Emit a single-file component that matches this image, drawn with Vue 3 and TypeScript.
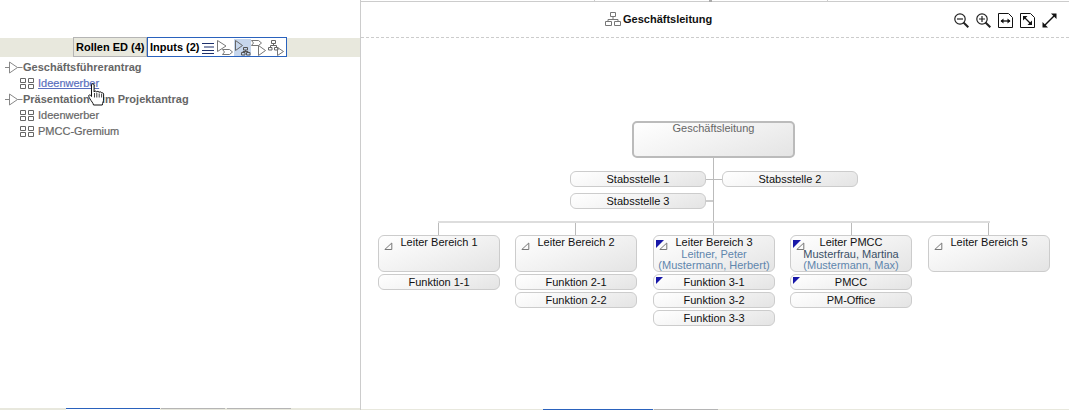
<script setup lang="ts">
interface Sub { label: string; mark?: boolean }
interface Lead { x: number; drop: number; title: string; lines?: { text: string; kind: string }[]; mark?: boolean; subs: Sub[] }

const staffs = [
  { label: 'Stabsstelle 1', x: 209, y: 133 },
  { label: 'Stabsstelle 2', x: 361, y: 133 },
  { label: 'Stabsstelle 3', x: 209, y: 155 }
]
const leads: Lead[] = [
  { x: 17, drop: 78, title: 'Leiter Bereich 1', subs: [{ label: 'Funktion 1-1' }] },
  { x: 154, drop: 215, title: 'Leiter Bereich 2', subs: [{ label: 'Funktion 2-1' }, { label: 'Funktion 2-2' }] },
  { x: 292, drop: 353, title: 'Leiter Bereich 3', mark: true, lines: [{ text: 'Leitner, Peter', kind: 'blue' }, { text: '(Mustermann, Herbert)', kind: 'blue' }], subs: [{ label: 'Funktion 3-1', mark: true }, { label: 'Funktion 3-2' }, { label: 'Funktion 3-3' }] },
  { x: 429, drop: 491, title: 'Leiter PMCC', mark: true, lines: [{ text: 'Musterfrau, Martina', kind: 'dark' }, { text: '(Mustermann, Max)', kind: 'blue' }], subs: [{ label: 'PMCC', mark: true }, { label: 'PM-Office' }] },
  { x: 567, drop: 628, title: 'Leiter Bereich 5', subs: [] }
]
const drops = leads.map(l => l.drop)
const tree = [
  { label: 'Geschäftsführerantrag', level: 1 },
  { label: 'Ideenwerber', level: 2, link: true },
  { label: 'Präsentation zum Projektantrag', level: 1 },
  { label: 'Ideenwerber', level: 2 },
  { label: 'PMCC-Gremium', level: 2 }
]
</script>

<template>
  <div class="page">
    <aside class="left">
      <div class="tabbar">
        <div class="tab">Rollen ED (4)</div>
        <div class="tab active">
          <span class="tablabel">Inputs (2)</span>
          <svg class="ti list" width="13" height="17" viewBox="0 0 13 17"><path d="M0 4.500h12M2 8h10M0 11.500h12M0 14.500h12" stroke="#1c2f6b" stroke-width="1.100" fill="none"/></svg>
          <svg class="ti" width="17" height="17" viewBox="0 0 17 17" fill="none" stroke="#777"><path d="M.5 1.500v11l8.500-5.500zM5.500 10.500h7l3 2.500-3 2.500h-7l2-2.500z"/></svg>
          <svg class="ti sel" width="17" height="17" viewBox="0 0 17 17" fill="none" stroke="#666"><path d="M1.500 1.500v10l7-5z"/><path d="M9.500 8.500h4v2.500h-4zM11.500 11v1.500M9 13.500v-1h5v1M7.500 13.500h3.500v2.500H7.500zM12.500 13.500H16v2.500h-3.500z" stroke="#555"/></svg>
          <svg class="ti" width="17" height="17" viewBox="0 0 17 17" fill="none" stroke="#777"><path d="M.5 1.500h7l3 2.500-3 2.500h-7l2-2.500zM7.500 6.500v10l7-5z"/></svg>
          <svg class="ti" width="17" height="17" viewBox="0 0 17 17" fill="none" stroke="#666"><path d="M3.500 1.500h4v3h-4zM5.500 4.500v2M2.500 8v-1.500h6V8M.5 8.500H4V11H.5zM6.500 8.500H10V11H6.500z"/><path d="M9.500 8.500v8l6-4z" stroke="#777"/></svg>
        </div>
      </div>
      <ul class="tree">
        <li v-for="(n, i) in tree" :key="i" class="row" :class="'lv' + n.level">
          <svg v-if="n.level === 1" width="18" height="14" viewBox="0 0 18 14" fill="none" stroke="#888"><path d="M0 7.500h4M4.500 2v11l8-5.500zM12.500 7.500h5"/></svg>
          <svg v-else width="15" height="13" viewBox="0 0 15 13" fill="none" stroke="#666"><path d="M.5 1.500h5v4h-5zM8.500 1.500h5v4h-5zM.5 7.500h5v4h-5zM8.500 7.500h5v4h-5z"/></svg>
          <span :class="{ link: n.link }">{{ n.label }}</span>
        </li>
      </ul>
      <svg class="hand" width="17" height="23" viewBox="0 0 17 23">
        <path d="M3.500 2c0-1.800 2.600-1.800 2.600 0v7c.4-1.400 2.400-1.200 2.500.2.400-1.300 2.400-1.100 2.500.3.500-1.100 2.400-.8 2.500.6.300-.6 2-.4 2 1V16c0 2.500-1 3.500-1.300 6H5.500c-.4-2.200-2-3.500-3.600-6.200C.7 13.700.3 12.500 1.200 12c1-.5 1.700.5 2.300 1.500z" fill="#fff" stroke="#111"/>
        <path d="M6.500 10v4.500M8.800 10v4.500M11.200 10.500v4M13.600 11v3.500" stroke="#444" fill="none"/>
      </svg>
      <div class="foot">
        <span class="ftab on"></span><span class="ftab"></span><span class="ftab"></span>
      </div>
    </aside>

    <main class="right">
      <div class="ticks"><i></i><i class="thick"></i><i></i></div>
      <header class="head">
        <div class="title">
          <svg width="16" height="14" viewBox="0 0 16 14" fill="none" stroke="#777"><path d="M5.500.5h5v4h-5zM8 4.500v3M3 9.500v-2h10v2M.5 9.500h6v4h-6zM9.500 9.500h6v4h-6z"/></svg>
          <span>Geschäftsleitung</span>
        </div>
        <div class="tools">
          <svg width="15" height="15" viewBox="0 0 15 15" fill="none" stroke="#222" stroke-width="1.200"><circle cx="6" cy="6" r="5.200"/><path d="M3 6h6"/><path d="M9.500 9.500l4.800 4.800" stroke-width="2"/></svg>
          <svg width="15" height="15" viewBox="0 0 15 15" fill="none" stroke="#222" stroke-width="1.200"><circle cx="6" cy="6" r="5.200"/><path d="M3 6h6M6 3v6"/><path d="M9.500 9.500l4.800 4.800" stroke-width="2"/></svg>
          <svg width="15" height="15" viewBox="0 0 15 15" fill="none" stroke="#111"><path d="M.5.5h10l4 4v10H.5z"/><path d="M3 8h9" stroke-width="1.300"/><path d="M5.500 5.500v5L2.500 8zM9.500 5.500v5l3-2.500z" fill="#111" stroke="none"/></svg>
          <svg width="15" height="15" viewBox="0 0 15 15" fill="none" stroke="#111"><path d="M.5.5h10l4 4v10H.5z"/><path d="M4 4l7 7" stroke-width="1.300"/><path d="M3 3h4.500L3 7.500zM12 12H7.500L12 7.500z" fill="#111" stroke="none"/></svg>
          <svg width="15" height="15" viewBox="0 0 15 15" fill="none"><path d="M3 12L12 3" stroke="#111" stroke-width="1.500"/><path d="M9 .5h5.500V6zM6 14.500H.5V9z" fill="#111"/></svg>
        </div>
      </header>

      <div class="canvas">
        <div class="wire v" style="left: 352px; top: 120px; height: 77px"></div>
        <div class="wire h" style="left: 77px; top: 183px; width: 552px"></div>
        <div class="wire stub" style="left: 345px; top: 141px; width: 16px"></div>
        <div class="wire stub3" style="left: 345px; top: 162px; width: 7px"></div>
        <div v-for="d in drops" :key="d" class="wire v" :style="{ left: d - 1 + 'px', top: '185px', height: '12px' }"></div>

        <div class="box rootbox">Geschäftsleitung</div>
        <div v-for="s in staffs" :key="s.label" class="box pill" :style="{ left: s.x + 'px', top: s.y + 'px' }">{{ s.label }}</div>

        <div v-for="l in leads" :key="l.title" class="col" :style="{ left: l.x + 'px' }">
          <div class="box lead">
            <svg v-if="l.mark" class="mk" width="8" height="8" viewBox="0 0 8 8"><path d="M0 0h8L0 8z" fill="#1717a8"/></svg>
            <svg class="tri" width="9" height="8" viewBox="0 0 9 8" fill="none" stroke="#777"><path d="M.8 7.500h7v-6.500z"/></svg>
            <div>{{ l.title }}</div>
            <div v-for="t in l.lines" :key="t.text" :class="t.kind">{{ t.text }}</div>
          </div>
          <div v-for="s in l.subs" :key="s.label" class="box sub">
            <svg v-if="s.mark" class="mk small" width="7" height="7" viewBox="0 0 7 7"><path d="M0 0h7L0 7z" fill="#1717a8"/></svg>
            {{ s.label }}
          </div>
        </div>
      </div>
      <div class="foot rf"><span class="ftab on"></span><span class="ftab"></span></div>
    </main>
  </div>
</template>

<style>
html, body { margin: 0; background: #fff; }
</style>

<style scoped>
.page { position: relative; display: flex; width: 1069px; height: 410px; overflow: hidden; background: #fff; font: 11px "Liberation Sans", Arial, sans-serif; color: #333; }
.left { position: relative; width: 360px; flex: none; display: flex; flex-direction: column; }
.tabbar { margin-top: 38px; height: 19px; background: #e8e8dd; display: flex; padding-left: 73px; box-sizing: border-box; font-weight: bold; color: #000; }
.tab { height: 20px; margin-top: -1px; box-sizing: border-box; padding: 0 2px; border: 1px solid #b5b5b5; line-height: 18px; width: 74px; text-align: center; white-space: nowrap; }
.tab.active { width: 140px; background: #fff; border-color: #2a62bd; display: flex; text-align: left; align-items: center; padding: 0 0 0 2px; }
.tablabel { width: 52px; flex: none; }
.ti { flex: none; }
.ti.list { margin-right: 2px; }
.ti.sel { background: #c6d6ec; }
.tree { list-style: none; margin: 2px 0 0; padding: 0; font-weight: bold; color: #666; }
.row { height: 16px; display: flex; align-items: center; white-space: nowrap; }
.lv1 { padding-left: 5px; }
.lv2 { padding-left: 20px; gap: 3px; font-weight: normal; -webkit-text-stroke: 0.200px #666; }
.link { color: #5a6fc0; text-decoration: underline; -webkit-text-stroke: 0.200px #5a6fc0; }
.hand { position: absolute; left: 88px; top: 83px; }
.foot { position: absolute; left: 0; right: 0; bottom: 0; height: 2px; background: #e8e8dd; display: flex; padding-left: 66px; }
.ftab { width: 64px; height: 2px; margin-right: 2px; box-sizing: border-box; border-top: 1px solid #b5b5b5; }
.ftab.on { width: 94px; margin-right: 1px; background: #fff; border-top-color: #2a62bd; }
.right { position: relative; flex: 1; min-width: 0; border-left: 1px solid #ccc; display: flex; flex-direction: column; box-sizing: border-box; }
.ticks { height: 1px; border-bottom: 1px solid #ccc; flex: none; display: flex; }
.ticks i { width: 1px; height: 1px; background: #ccc; margin-left: 115px; }
.ticks i:first-child { margin-left: 233px; }
.ticks i.thick { width: 3px; height: 2px; background: #aaa; margin-left: 114px; }
.head { height: 35px; flex: none; border-bottom: 1px dashed #ccc; position: relative; }
.title { position: absolute; left: 244px; top: 10px; display: flex; align-items: center; gap: 2px; font-weight: bold; color: #111; }
.tools { position: absolute; left: 593px; top: 11px; display: flex; gap: 7px; align-items: center; }
.canvas { position: relative; flex: 1; }
.wire { position: absolute; background: #bbb; }
.wire.v { width: 1px; }
.wire.h { height: 2px; background: #ddd; }
.wire.stub { height: 1px; background: #bbb; }
.wire.stub3 { height: 2px; background: #ccc; }
.box { box-sizing: border-box; text-align: center; background: linear-gradient(160deg, #fff 0%, #f2f2f2 50%, #e4e4e4 100%); border: 1px solid #ccc; border-radius: 6px; color: #111; white-space: nowrap; }
.rootbox { position: absolute; left: 271px; top: 83px; width: 163px; height: 37px; border: 2px solid #bbb; border-radius: 5px; color: #666; line-height: 11px; }
.pill { position: absolute; width: 136px; height: 16px; line-height: 14px; }
.col { position: absolute; top: 197px; width: 122px; display: flex; flex-direction: column; gap: 2px; }
.lead { position: relative; height: 37px; line-height: 11.500px; padding-top: 1px; }
.sub { position: relative; height: 16px; line-height: 14px; }
.mk { position: absolute; left: 2px; top: 4px; }
.mk.small { top: 2px; }
.tri { position: absolute; left: 5px; top: 6px; }
.blue { color: #5f86ad; }
.dark { color: #3a4f66; }
.rf { left: 0; padding-left: 182px; height: 1px; background: #e8e8dd; }
.rf .ftab { height: 1px; }
.rf .ftab.on { width: 110px; }
</style>
